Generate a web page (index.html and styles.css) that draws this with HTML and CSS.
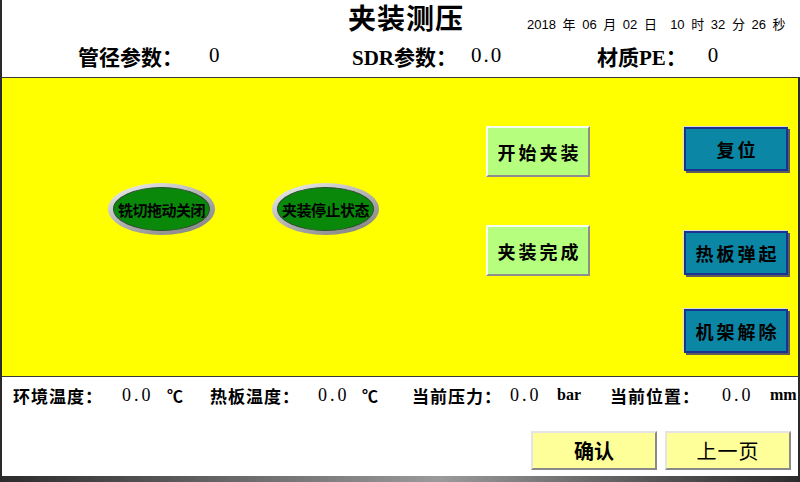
FILE: index.html
```html
<!DOCTYPE html>
<html lang="zh">
<head>
<meta charset="utf-8">
<title>夹装测压</title>
<link rel="stylesheet" href="styles.css">
</head>
<body>
<div class="screen">
  <header class="header">
    <div class="title-row">
      <h1 class="title">夹装测压</h1>
      <div class="date">2018 年 06 月 02 日 &nbsp;10 时 32 分 26 秒</div>
    </div>
    <div class="params">
      <div class="param p1"><span class="plabel">管径参数：</span><span class="pval v1">0</span></div>
      <div class="param p2"><span class="plabel">SDR参数：</span><span class="pval v2">0.0</span></div>
      <div class="param p3"><span class="plabel">材质PE：</span><span class="pval v3">0</span></div>
    </div>
  </header>

  <main class="panel">
    <div class="ovals">
      <div class="oval"><div class="oval-inner">铣切拖动关闭</div></div>
      <div class="oval"><div class="oval-inner">夹装停止状态</div></div>
    </div>
    <div class="gcol">
      <div class="gbtn">开始夹装</div>
      <div class="gbtn">夹装完成</div>
    </div>
    <div class="bcol">
      <div class="bbtn">复位</div>
      <div class="bbtn b2">热板弹起</div>
      <div class="bbtn b3">机架解除</div>
    </div>
  </main>

  <footer class="footer">
    <div class="readings">
      <span class="rl">环境温度：</span><span class="rv">0.0</span><span class="ru">℃</span>
      <span class="rl">热板温度：</span><span class="rv">0.0</span><span class="ru">℃</span>
      <span class="rl">当前压力：</span><span class="rv">0.0</span><span class="ru">bar</span>
      <span class="rl">当前位置：</span><span class="rv">0.0</span><span class="ru">mm</span>
    </div>
    <div class="actions">
      <div class="ybtn ok">确认</div>
      <div class="ybtn prev">上一页</div>
    </div>
    <div class="bar"></div>
  </footer>
</div>
</body>
</html>
```

FILE: styles.css
```css
html, body {
  margin: 0;
  padding: 0;
  background: #ffffff;
}
body {
  width: 800px;
  height: 482px;
  overflow: hidden;
  font-family: "Liberation Serif", "Noto Sans CJK SC", serif;
  color: #000;
}
.screen {
  width: 800px;
  height: 482px;
  box-sizing: border-box;
  border-left: 2px solid #2a2a2a;
  display: flex;
  flex-direction: column;
}

/* header */
.header {
  height: 77px;
  flex: none;
}
.title-row {
  display: flex;
  align-items: baseline;
  height: 38px;
  padding-left: 346px;
}
.title {
  margin: 0;
  font-family: "Noto Sans CJK SC", sans-serif;
  font-size: 28px;
  font-weight: bold;
  line-height: 34px;
  letter-spacing: 1px;
}
.date {
  margin-left: 63px;
  font-family: "Liberation Sans", "Noto Sans CJK SC", sans-serif;
  font-size: 13px;
  word-spacing: 3px;
  white-space: nowrap;
}
.params {
  display: flex;
  align-items: center;
  height: 35px;
  padding-left: 76px;
  font-size: 21px;
  font-weight: bold;
}
.param {
  display: flex;
  align-items: center;
}
.p1 { width: 274px; }
.p2 { width: 245px; }
.plabel {
  font-family: "Liberation Serif", "Noto Sans CJK SC", serif;
}
.pval {
  font-family: "Liberation Serif", serif;
  font-weight: normal;
  letter-spacing: 2px;
}
.v1 { margin-left: 26px; }
.v2 { margin-left: 14px; }
.v3 { margin-left: 21px; }

/* yellow panel */
.panel {
  flex: none;
  height: 300px;
  box-sizing: border-box;
  background: #ffff00;
  border-top: 1px solid #3a3a3a;
  border-bottom: 1px solid #3a3a3a;
  border-right: 2px solid #2a2a2a;
  display: flex;
  align-items: flex-start;
}
.ovals {
  display: flex;
  gap: 57px;
  margin-left: 106px;
  margin-top: 105px;
}
.oval {
  width: 107px;
  height: 52px;
  box-sizing: border-box;
  padding: 4px 5px;
  border-radius: 50%;
  background: linear-gradient(160deg, #f4f4f4 0%, #b8b8b8 45%, #7a7a7a 100%);
  display: flex;
}
.oval-inner {
  flex: 1;
  border-radius: 50%;
  background: #0a880a;
  border: 1px solid #2f4f2f;
  display: flex;
  align-items: center;
  justify-content: center;
  font-family: "Noto Sans CJK SC", sans-serif;
  font-size: 15px;
  font-weight: bold;
  letter-spacing: -0.5px;
  white-space: nowrap;
}
.gcol {
  display: flex;
  flex-direction: column;
  gap: 48px;
  margin-left: 107px;
  margin-top: 48px;
}
.gbtn {
  width: 104px;
  height: 51px;
  box-sizing: border-box;
  background: #b6ff7e;
  border: 2px solid;
  border-color: #f6fff2 #8e8e8e #8e8e8e #f6fff2;
  display: flex;
  align-items: center;
  justify-content: center;
  font-family: "Noto Sans CJK SC", sans-serif;
  font-size: 18px;
  font-weight: bold;
  letter-spacing: 3px;
  padding-left: 3px;
}
.bcol {
  display: flex;
  flex-direction: column;
  margin-left: 94px;
  margin-top: 49px;
}
.bbtn {
  width: 104px;
  height: 44px;
  box-sizing: border-box;
  background: #0b86a4;
  border: 2px solid #1a3290;
  box-shadow: -1px -1px 0 #dcdcdc, 2px 2px 0 #5c5c5c;
  display: flex;
  align-items: center;
  justify-content: center;
  font-family: "Noto Sans CJK SC", sans-serif;
  font-size: 18px;
  font-weight: bold;
  letter-spacing: 3px;
  padding-left: 3px;
}
.b2 { margin-top: 60px; }
.b3 { margin-top: 34px; }

/* footer */
.footer {
  flex: 1;
  display: flex;
  flex-direction: column;
  border-right: 2px solid #2a2a2a;
}
.readings {
  display: grid;
  grid-template-columns: 109px 45px 43px 108px 44px 50px 98px 47px 53px 112px 48px auto;
  align-items: center;
  height: 36px;
  padding-left: 11px;
  font-size: 17px;
  white-space: nowrap;
}
.rl {
  font-family: "Noto Sans CJK SC", sans-serif;
  font-weight: bold;
  letter-spacing: 1px;
}
.rv {
  font-family: "Liberation Serif", serif;
  font-size: 18px;
  letter-spacing: 3px;
}
.ru {
  font-family: "Liberation Serif", "Noto Sans CJK SC", serif;
  font-weight: bold;
  font-size: 16px;
}
.actions {
  display: flex;
  justify-content: flex-end;
  gap: 8px;
  padding-right: 7px;
  margin-top: 18px;
}
.ybtn {
  width: 126px;
  height: 39px;
  box-sizing: border-box;
  background: #ffff99;
  border: 2px solid;
  border-color: #e4e4e4 #8a8a8a #8a8a8a #e4e4e4;
  display: flex;
  align-items: center;
  justify-content: center;
  font-family: "Noto Sans CJK SC", sans-serif;
  font-size: 20px;
}
.ok { font-weight: bold; }
.prev { font-weight: normal; letter-spacing: 1px; }
.bar {
  margin-top: auto;
  height: 6px;
  background: linear-gradient(90deg, #2c2c2c 0%, #6a6a6a 30%, #9a9a9a 55%, #5a5a5a 80%, #2c2c2c 100%);
}
```
